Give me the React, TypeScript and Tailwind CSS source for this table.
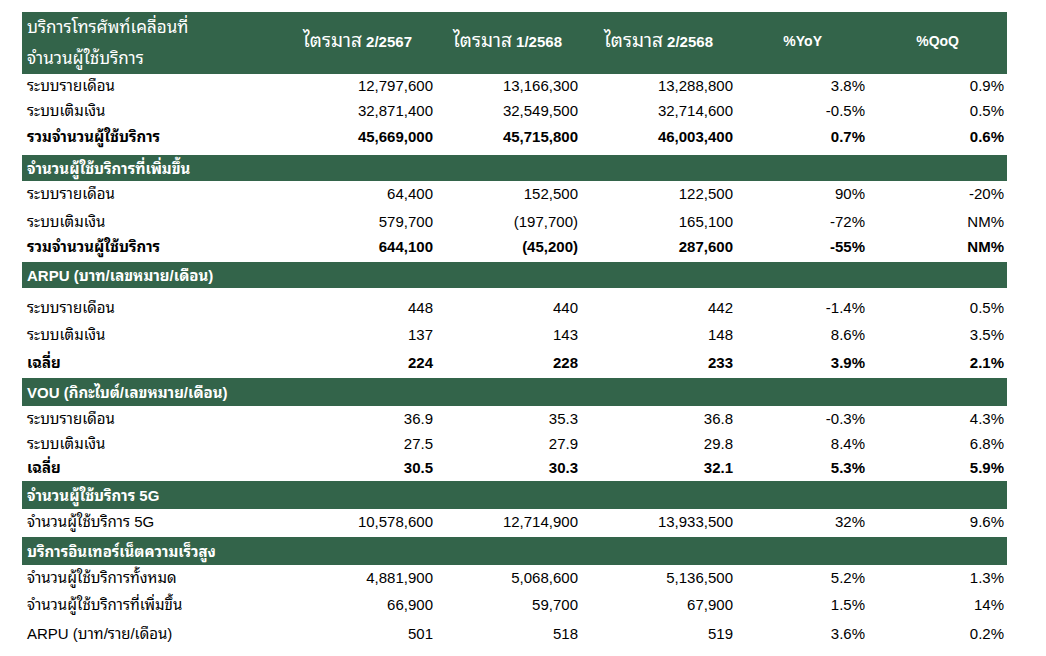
import React from "react";

// grid: label | Q2/2567 | Q1/2568 | Q2/2568 | %YoY | %QoQ
const cols = "grid grid-cols-[274px_140px_145px_155px_132px_139px]";

const fontStack =
  '"Liberation Sans", "Noto Sans Thai Looped", "Loma", "Garuda", "Tlwg Typo", "Norasi", "Noto Serif Thai", "Noto Sans Thai", "Noto Sans", sans-serif';

type Row = {
  label: string;
  values: string[];
  bold?: boolean;
  h: number; // row height
  pt: number; // text offset from the top of the row
};

type Section = {
  title: React.ReactNode;
  h: number;
  rows: Row[];
};

const sections: Section[] = [
  {
    title: null,
    h: 0,
    rows: [
      { label: "ระบบรายเดือน", values: ["12,797,600", "13,166,300", "13,288,800", "3.8%", "0.9%"], h: 27, pt: 3 },
      { label: "ระบบเติมเงิน", values: ["32,871,400", "32,549,500", "32,714,600", "-0.5%", "0.5%"], h: 27, pt: 1 },
      { label: "รวมจำนวนผู้ใช้บริการ", values: ["45,669,000", "45,715,800", "46,003,400", "0.7%", "0.6%"], bold: true, h: 27, pt: 0 },
    ],
  },
  {
    title: "จำนวนผู้ใช้บริการที่เพิ่มขึ้น",
    h: 26,
    rows: [
      { label: "ระบบรายเดือน", values: ["64,400", "152,500", "122,500", "90%", "-20%"], h: 27, pt: 4 },
      { label: "ระบบเติมเงิน", values: ["579,700", "(197,700)", "165,100", "-72%", "NM%"], h: 27, pt: 5 },
      { label: "รวมจำนวนผู้ใช้บริการ", values: ["644,100", "(45,200)", "287,600", "-55%", "NM%"], bold: true, h: 27, pt: 3 },
    ],
  },
  {
    title: (
      <>
        <span>ARPU</span> <span>(บาท/เลขหมาย/เดือน)</span>
      </>
    ),
    h: 26,
    rows: [
      { label: "ระบบรายเดือน", values: ["448", "440", "442", "-1.4%", "0.5%"], h: 30, pt: 11 },
      { label: "ระบบเติมเงิน", values: ["137", "143", "148", "8.6%", "3.5%"], h: 30, pt: 8 },
      { label: "เฉลี่ย", values: ["224", "228", "233", "3.9%", "2.1%"], bold: true, h: 30, pt: 6 },
    ],
  },
  {
    title: (
      <>
        <span>VOU</span> <span>(กิกะไบต์/เลขหมาย/เดือน)</span>
      </>
    ),
    h: 28,
    rows: [
      { label: "ระบบรายเดือน", values: ["36.9", "35.3", "36.8", "-0.3%", "4.3%"], h: 25, pt: 4 },
      { label: "ระบบเติมเงิน", values: ["27.5", "27.9", "29.8", "8.4%", "6.8%"], h: 25, pt: 4 },
      { label: "เฉลี่ย", values: ["30.5", "30.3", "32.1", "5.3%", "5.9%"], bold: true, h: 25, pt: 3 },
    ],
  },
  {
    title: "จำนวนผู้ใช้บริการ 5G",
    h: 28,
    rows: [
      { label: "จำนวนผู้ใช้บริการ 5G", values: ["10,578,600", "12,714,900", "13,933,500", "32%", "9.6%"], h: 28, pt: 4 },
    ],
  },
  {
    title: "บริการอินเทอร์เน็ตความเร็วสูง",
    h: 28,
    rows: [
      { label: "จำนวนผู้ใช้บริการทั้งหมด", values: ["4,881,900", "5,068,600", "5,136,500", "5.2%", "1.3%"], h: 26, pt: 4 },
      { label: "จำนวนผู้ใช้บริการที่เพิ่มขึ้น", values: ["66,900", "59,700", "67,900", "1.5%", "14%"], h: 27, pt: 5 },
      { label: "ARPU (บาท/ราย/เดือน)", values: ["501", "518", "519", "3.6%", "0.2%"], h: 28, pt: 7 },
    ],
  },
];

const quarterHeads = [
  { q: "2/2567", pr: "pr-[24px]" },
  { q: "1/2568", pr: "pr-[19px]" },
  { q: "2/2568", pr: "pr-[23px]" },
];

function DataRow({ row }: { row: Row }) {
  return (
    <div className={`${cols} ${row.bold ? "font-bold" : ""}`} style={{ height: row.h, paddingTop: row.pt }}>
      <div className="pl-[5px] whitespace-nowrap">{row.label}</div>
      {row.values.map((v, i) => (
        <div key={i} className="text-right pr-[3px] whitespace-nowrap">
          {v}
        </div>
      ))}
    </div>
  );
}

export default function App() {
  return (
    <div
      className="min-h-screen bg-white pl-[22px] pt-[12px] text-[15px] leading-[17px] text-black"
      style={{ fontFamily: fontStack }}
    >
      <div className="w-[985px]">
        {/* top header */}
        <div className={`${cols} h-[62px] bg-[#33644a] text-white`}>
          <div className="pl-[5px] pt-0 text-[17px] leading-[31px] whitespace-nowrap">
            <div>บริการโทรศัพท์เคลื่อนที่</div>
            <div>จำนวนผู้ใช้บริการ</div>
          </div>
          {quarterHeads.map((h) => (
            <div key={h.q} className={`text-right ${h.pr} pt-[20px] whitespace-nowrap`}>
              <span className="text-[19px]">ไตรมาส</span> <span className="font-bold">{h.q}</span>
            </div>
          ))}
          <div className="pr-[46px] pt-[21px] text-right text-[14px] font-bold">%YoY</div>
          <div className="pr-[48px] pt-[21px] text-right text-[14px] font-bold">%QoQ</div>
        </div>

        {sections.map((s, si) => (
          <div key={si}>
            {s.title && (
              <div
                className="flex items-center bg-[#33644a] pl-[5px] font-bold text-white whitespace-nowrap"
                style={{ height: s.h }}
              >
                <div>{s.title}</div>
              </div>
            )}
            {s.rows.map((r, ri) => (
              <DataRow key={ri} row={r} />
            ))}
          </div>
        ))}
      </div>
    </div>
  );
}
